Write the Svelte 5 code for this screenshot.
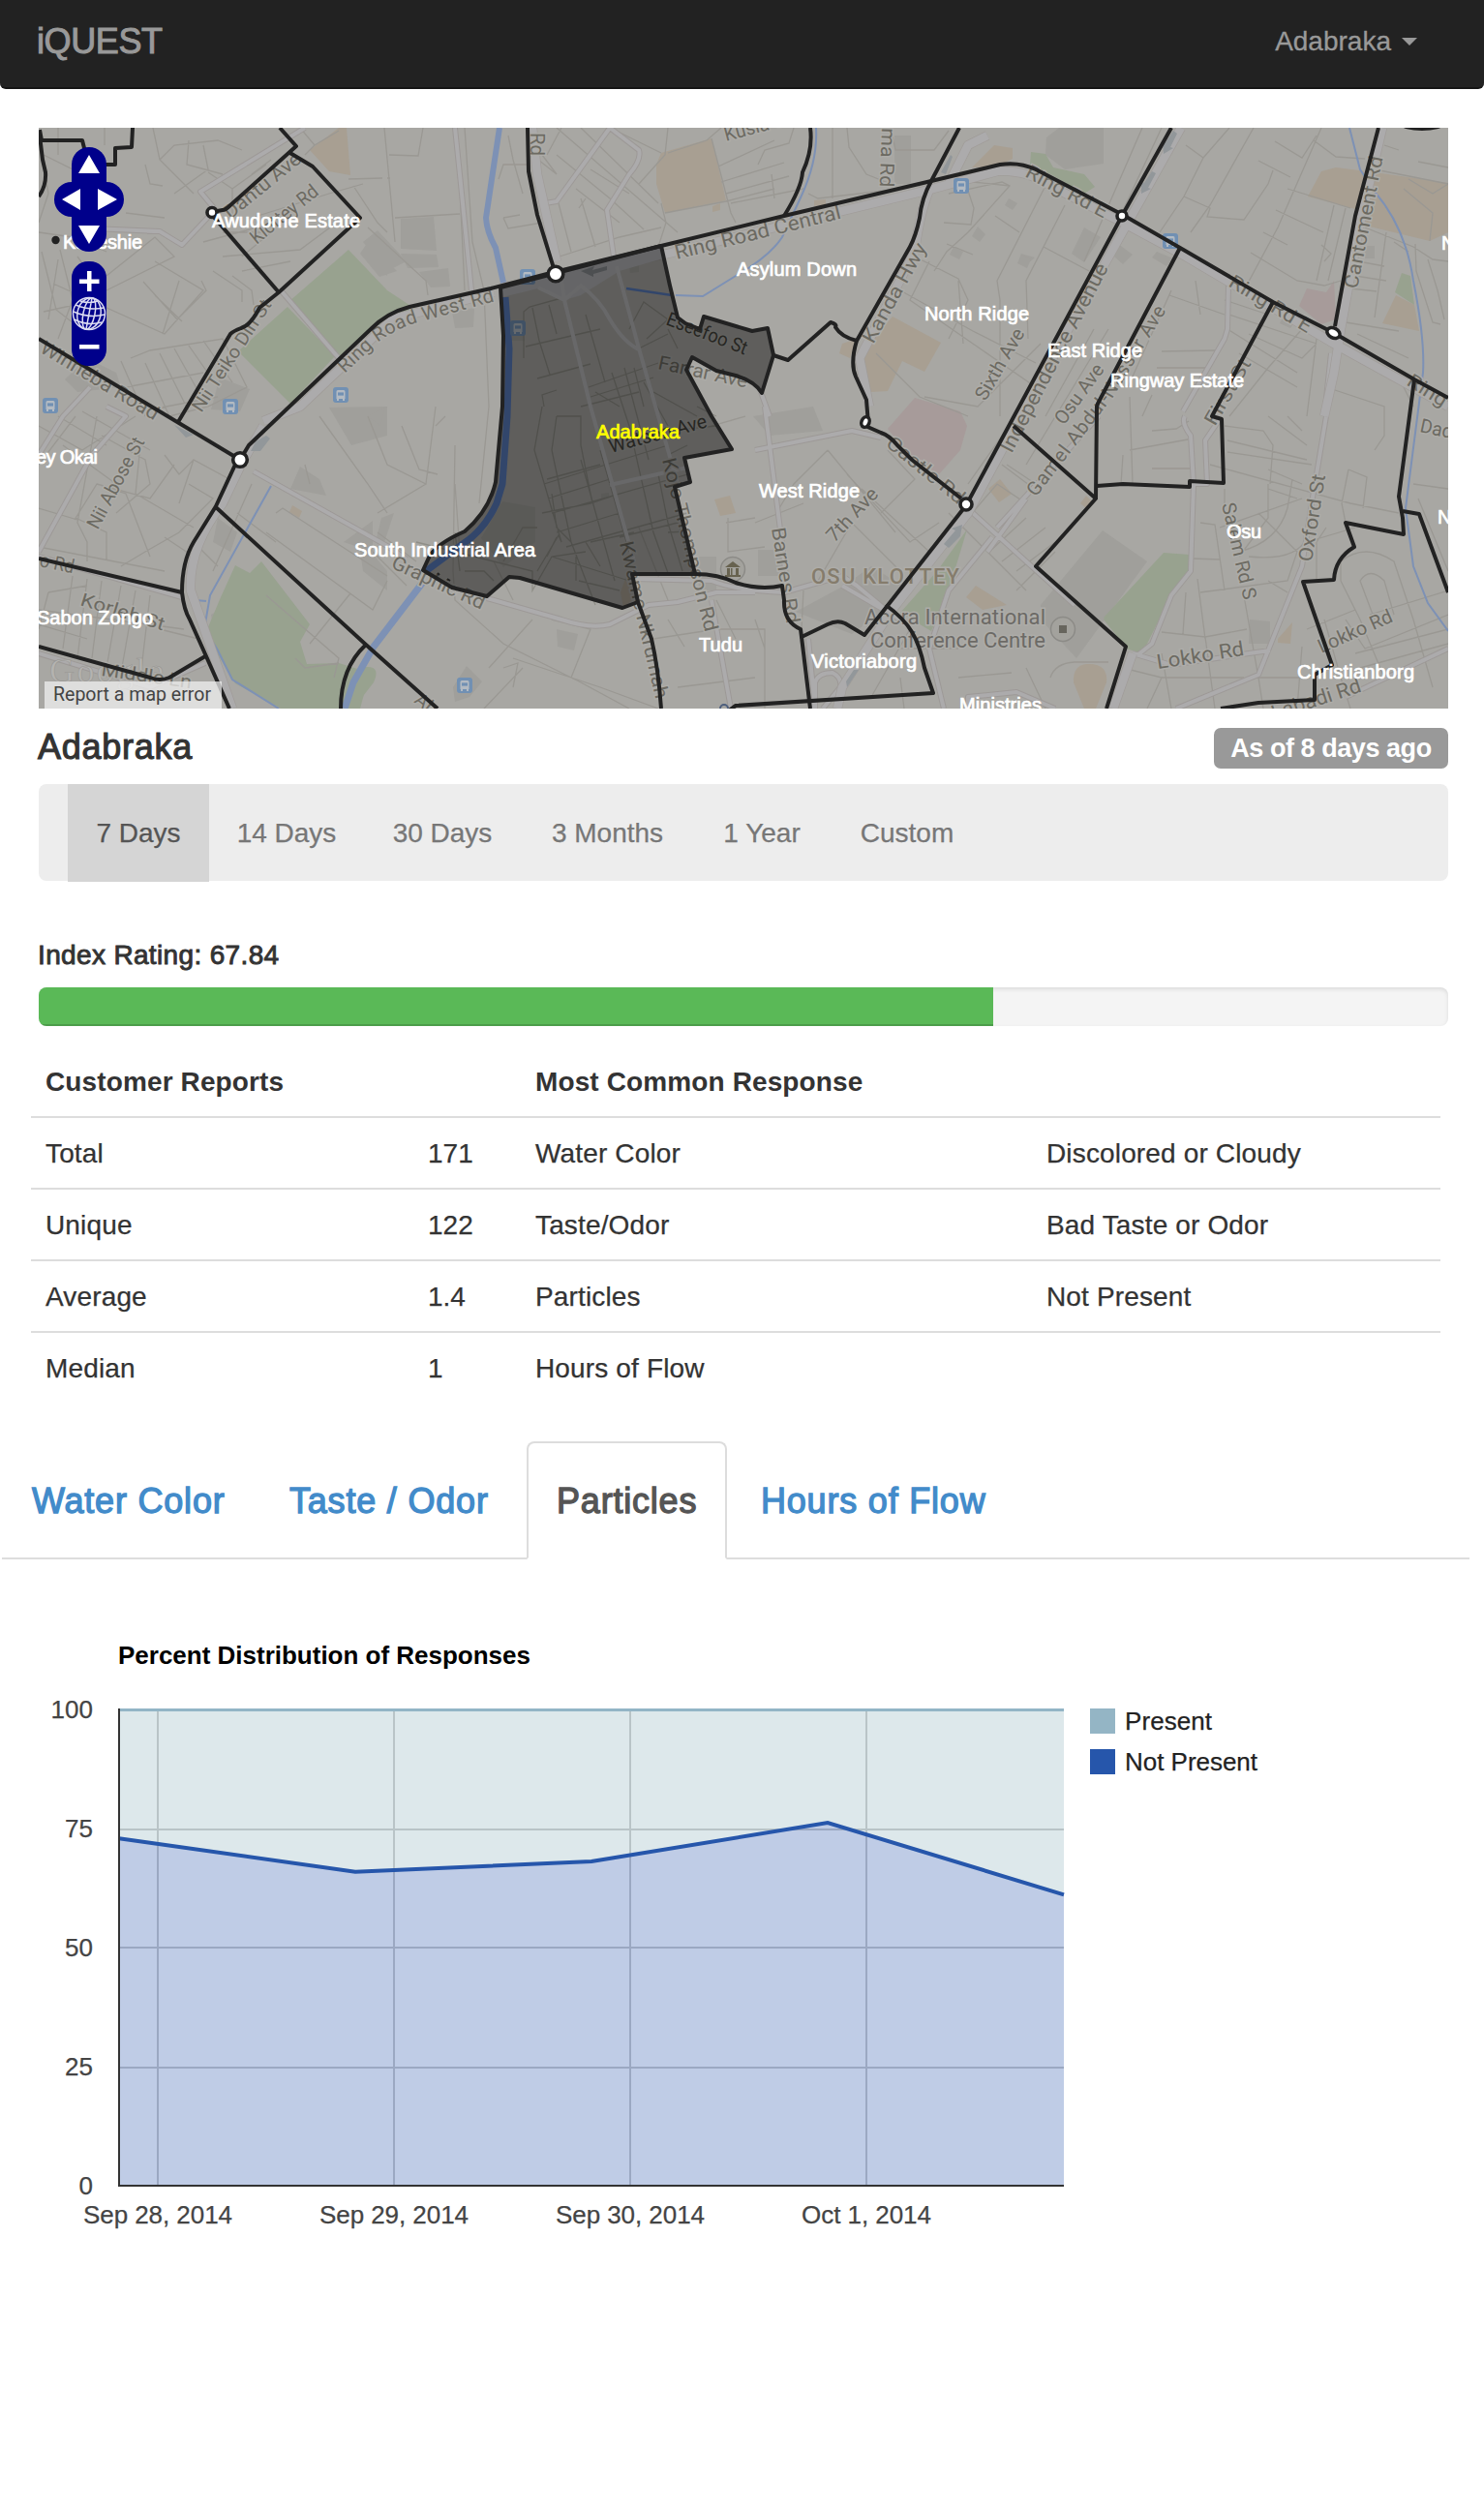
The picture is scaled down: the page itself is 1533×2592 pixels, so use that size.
<script>
  const periods = ['7 Days', '14 Days', '30 Days', '3 Months', '1 Year', 'Custom'];
  const rows = [
    ['Total', '171', 'Water Color', 'Discolored or Cloudy'],
    ['Unique', '122', 'Taste/Odor', 'Bad Taste or Odor'],
    ['Average', '1.4', 'Particles', 'Not Present'],
    ['Median', '1', 'Hours of Flow', '']
  ];
  const tabs = ['Water Color', 'Taste / Odor', 'Particles', 'Hours of Flow'];
  const rating = 67.84;

  const parks = [
    'M360 258L400 300L438 325L415 330L383 342L348 372L298 312Z',
    'M297 317L346 368L300 417L246 363Z',
    'M270 580L320 645L310 663L317 686L350 685L382 695L372 732H290L243 706L212 655L228 617L243 584L258 592Z',
    'M372 690Q395 685 386 705L365 732H355Z',
    'M999 547L980 610L962 652L930 633L968 590Z',
    'M1202 571L1229 573V592L1205 625L1180 675L1163 670L1140 638Z',
    'M1160 622L1140 640L1160 665Z',
    'M1065 157L1080 159L1088 173L1120 180L1131 193L1120 200L1087 181L1064 170Z',
    'M1448 282L1457 285L1461 315L1441 302Z'
  ];
  const sands = [
    'M350 132H358L362 181L340 177L320 155Z',
    'M683 158L735 143L750 207L687 220L678 190L678 170Z',
    'M736 213l8 -3v7l-8 2Z',
    'M922 327L972 354L955 384L932 373L917 404L900 405L892 385L890 365Z',
    'M870 355L885 350L878 370L867 365Z',
    'M1004 173L1027 150L1046 153V164L1030 172Z',
    'M841 207l12 -1v6l-12 1Z',
    'M1351 203L1365 177L1380 173L1420 178L1496 189V240L1477 249L1415 234L1400 216Z',
    'M1442 305L1461 315L1466 342L1428 334Z',
    'M738 516l16 -4l6 18l-16 3Z',
    'M1033 495L1045 510L1032 519L1021 505Z',
    'M1008 605L1040 625L1015 630L998 617Z',
    'M1122 512l8 8l-8 5l-6 -5Z',
    'M1320 660L1335 643L1333 665L1320 664Z',
    'M1109 705Q1108 687 1123 686Q1145 685 1143 705L1132 732H1120Z',
    'M302 522l10 6l-3 7l-10 -6Z',
    'M647 595L653 620L644 628L641 612Z'
  ];
  const pinks = [
    'M945 411L992 425L999 440L992 465L970 490L940 472L917 443Z',
    'M1350 298L1370 302L1378 290L1380 330L1365 335L1342 316Z'
  ];
  const blocks = [
    'M414 226L448 224L451 259L414 257Z', 'M380 250L410 280L392 286L372 262Z', 'M414 262L451 263L453 276L421 277Z',
    'M373 262L388 248L400 262L400 285Z', 'M467 322L490 318L489 338L470 339Z', 'M433 281L463 277L465 296L445 297Z',
    'M1081 142L1110 120L1140 132V169L1100 175L1080 160Z', 'M924 140H941V190H924Z', 'M1120 235L1137 245L1120 271L1107 262Z',
    'M1055 262L1069 266L1060 274L1052 270Z', 'M1010 234L1018 242L1012 250L1004 244Z', 'M1042 205l9 5l-5 7l-8 -5Z',
    'M1139 548L1185 580L1112 680L1075 640V625Z', 'M822 632L872 605L900 585L940 610L880 655Z',
    'M783 568H812V595H783Z', 'M778 430L840 420L850 445L795 450Z', 'M225 535L245 550L238 570L220 560Z',
    'M218 635L240 622L245 650L222 660Z', 'M90 370L120 385L125 400L80 405L67 392Z', 'M340 421L400 420V450L363 460Z',
    'M310 482L330 495L337 512L300 505Z', 'M227 390L258 402L248 425L218 423Z', 'M385 538V570L355 560Z',
    'M370 555L400 590V610L375 590Z', 'M400 420H398L393 440L380 430Z', 'M394 535L407 530L397 560L388 560Z',
    'M468 710L482 688L498 704L485 720L470 725Z', 'M1291 640L1312 642V665H1290Z', 'M720 575H740V610H722Z',
    'M575 650L597 655L593 672L576 668Z', 'M375 250L390 238L420 270L400 280Z',
    'M1155 252L1170 263L1160 273L1150 264Z', 'M1195 260L1212 267L1205 275L1190 266Z', 'M1410 254h10v13h-10Z',
    'M985 255l10 5l-4 8l-10 -5Z', 'M1055 263l10 5l-4 9l-10 -5Z', 'M1327 325l12 5l-6 9l-11 -5Z',
    'M519 518L553 524V560L520 586L497 556Z', 'M527 340h15v12h-15Z', 'M650 275l10 -1v7l-9 1Z', 'M621 510l8 -1v5l-8 1Z'
  ];
  const minor = `M40 140L50 200L40 230 M60 132V160 M108 132V150 M45 160L75 175V230 M40 240L75 245L110 260 M60 268L50 330 M43 260L58 320L90 345
    M62 258L75 310L60 350 M80 265L105 300L85 340 M110 285L160 245L180 265L110 300 M55 293L170 345L210 300L160 270 M45 322L100 310
    M148 291L183 330L213 300L208 290 M160 305L188 332 M168 345L185 290 M135 370L155 362L230 350L255 400L215 420L175 430 M150 375L175 430 M165 365L195 425
    M180 360L208 410 M195 357L225 400 M210 352L240 395 M130 400L210 385 M145 425L225 410 M125 373L150 430
    M158 132L165 165L200 200 M165 165L180 150L225 145L250 155 M195 145L193 170L230 180 M150 170L155 190L168 192 M130 220L170 225M210 150L215 175L180 200
    M215 178L240 195V225M240 195L275 170 M260 180L280 165 M230 240L280 240L250 265 M210 250L265 235 M230 265L310 258L345 232 M250 280L300 270M260 225L340 200L375 190
    M240 285L260 300L262 315 M220 280L250 300V312 M360 185L395 184 M365 192L390 230L400 240 M310 132L325 150L315 160M325 150L350 135
    M397 132L408 250 M402 160L432 161L437 132 M403 184L400 184 M408 225L475 221 M380 235L440 290L442 305 M472 132L480 300 M480 132L488 250L500 300 L505 420L495 520
    M525 140L530 165L540 200 M515 185L520 170L545 170 M520 225L525 236L560 230 M520 225L537 222
    M556 165L575 180L560 160 M575 132L700 240 M600 132L680 210 M630 132L683 158 M575 160L630 205 M595 195L640 230 M610 175L650 200 M630 205L665 237
    M565 160L580 132 M577 210L590 260 M600 205L615 255 M598 215L605 205 M578 265L640 245L683 235 M660 190L687 160L690 132 M680 255L688 230L683 210
    M690 158L730 145L745 132M735 143L755 220L760 230 M742 172L800 145 M745 188L810 168 M750 200L815 182 M755 210L830 195 M687 220L750 208L800 195
    M783 170L790 155L815 148L820 132 M800 205L797 180 M860 132V205 M875 132L877 152L895 180L925 192 M835 200L845 205L930 195
    M920 132L925 155L965 155L980 135 M948 190L960 210 M980 200L1035 188L1043 192L1000 240L978 260L965 280 M975 230L1003 232L1006 215L1000 197
    M978 252L1005 263 M1005 188L1043 192 M1080 192L1030 290L1033 310V430 M1100 212L1060 290L1062 350 M1028 223L1053 240 M1078 255L1125 280
    M945 265L990 288L1000 310L980 350 M960 270L940 310L1070 400 M930 300L1005 342L1070 375 M990 290L995 355 M1075 355L1010 420L955 410
    M905 365L950 410L1000 430 M1000 500L1060 415L1100 360 M1130 340L1080 430 M1145 340L1060 480 M1180 132L1120 270 M1200 132L1140 260
    M1225 150L1243 163L1223 203L1198 240 M1295 132L1250 212L1230 240 M1243 163L1270 132 M1223 203L1250 215L1247 224L1285 227L1310 190L1315 176
    M1365 132L1320 235L1285 300 M1300 166L1333 183 M1317 146L1345 163L1360 140 M1357 145L1380 162L1410 164 M1330 195L1395 215 M1318 217L1367 240
    M1305 240L1330 253 M1292 261L1340 290L1368 295L1385 290 M1378 212L1360 290 M1390 215L1372 290 M1365 253L1375 262L1368 270M1403 270L1430 275 M1400 285L1432 290
    M1395 298L1422 301 M1432 240L1420 328 M1410 235L1460 255L1480 268L1496 270 M1462 252L1463 280L1480 333L1488 335 M1475 268L1485 300L1492 330 M1430 150L1445 155 M1465 167L1496 173
    M1420 175L1496 190 M1455 185L1480 200L1496 190 M1455 260L1440 250 M1477 249L1480 220L1450 195 M1390 333L1445 342 M1402 345L1455 370 M1450 400L1460 420
    M1210 300L1165 400 M1208 305L1265 325 M1235 290L1240 325 M1200 363L1255 362 M1195 380H1245 M1265 310L1310 325 M1270 325L1360 355 M1268 340L1340 385
    M1280 365L1340 400 M1290 345L1345 370L1360 355 M1360 350L1350 430 M1345 340L1310 380L1270 430 M1385 360L1450 395 M1370 400L1430 420V450L1420 465
    M1167 410L1170 500 M1190 408L1180 430 M1190 445L1215 443L1228 435 M1167 465L1227 454 M1160 470L1158 500 M1190 484H1230
    M1265 440L1305 445L1315 460L1312 500 M1268 455L1350 475 M1268 467L1355 480 M1250 480L1395 520L1445 530 M1310 430L1350 460 M1330 430L1345 445
    M1310 485L1345 500 M1310 505L1340 515 M1335 495L1330 525 M1265 505V530 M1310 500V535L1280 575 M1240 540L1255 542L1265 610 M1260 545L1345 515 M1330 525Q1320 560 1280 570
    M1290 575Q1340 580 1350 555 M1300 530L1340 570L1330 600L1240 612M1310 600L1330 612 M1232 577L1260 578 M1237 598L1245 660 M1225 612L1222 655 M1200 653L1245 658L1288 650 M1284 610L1300 700 L1305 732
    M1370 545L1360 560V600 M1350 560L1400 545 M1393 485L1386 520L1390 540 M1393 485L1412 493L1408 525 M1385 600V580Q1410 560 1440 580L1460 640L1480 710 M1385 600L1405 640L1430 700
    M1420 640L1405 600Q1415 585 1430 600L1440 635 M1415 635L1496 610 M1390 640L1410 670L1496 635 M1400 675L1496 650 M1405 690L1496 665 M1350 650L1400 630 M1368 640L1385 700L1395 732 M1465 515L1496 590 M1460 500L1496 505
    M40 440L85 465L140 430 M60 430L110 460 M85 425L155 465 M78 430L40 480 M65 460L120 500 M100 500L155 515L180 480 M100 430L80 540L90 560V580 M78 535L110 550L110 580
    M40 525L80 537 M77 537L100 500L130 510L155 575 M170 470L185 490L200 475 M145 460L140 510L200 545 M195 500L220 515L185 550L150 570L125 585 M185 520L200 475L237 495 M170 555L200 575
    M105 450L150 475L155 500L120 530 M40 565L170 590 M50 612L90 605 M50 612L40 650 M75 595L65 670 M90 598L80 680 M105 600L95 680 M125 605L110 690 M140 610L125 695 M155 615L145 700 M40 630L190 650 M40 645L90 660 M200 560L225 585 M165 650L205 660
    M245 530L285 560 M220 590L260 500 M285 530L292 525L400 595 M275 550L385 630L400 600 M275 615L350 680L345 700 M350 685L315 690L305 680 M362 613L320 665 M320 500L315 480 M330 430L380 500L400 530
    M380 430L400 480L440 500L450 420 M450 440L460 430M440 500L390 530 M415 440L433 485L452 490 M470 460L468 590L470 620L520 665L600 705L650 732 M470 500L475 570
    M390 550L430 580 M385 570L420 605 M510 580L530 620 M505 690L550 640 M530 680L620 710L680 732 M520 690L535 685L530 710 M500 732L540 690 M570 640L610 650L590 700
    M660 545L690 620 M700 540L720 600 M675 660L740 650 M690 640L707 668 M700 710L780 700 M740 620L760 660 M735 440L770 430 M750 540L780 535 M752 535V570L790 565
    M740 650L790 650L790 732 M780 640L790 670 M855 465L925 550 M855 465L820 500L805 525 M875 490L940 560L970 540 M910 530L945 495L917 465 M890 505L960 570 M930 590L880 540L845 600 M780 540L830 520 M830 610L828 650
    M980 530L1050 600 M1000 535L1030 500L1060 520 M1022 570L1060 535 M1035 580L1080 545 M1050 590L1090 560 M1050 610L1090 570 M1010 560L1060 610 M1040 480L1070 500 M940 650L900 720 M930 670H990 M990 700L1045 695 M1035 480L1075 510
    M1085 700Q1090 685 1110 684H1145 M1060 690L1080 732 M930 700L934 732 M1160 690L1200 700L1185 732 M1200 700L1285 700 M1200 675L1210 732 M1245 658L1255 732 M1345 668L1340 732 M1290 700L1345 700`;
  const major = `M315 132L207 198L221 215 M315 132L207 198 M152 239H165L188 253L220 219 M95 236L165 239L188 253 M470 132L477 200L487 300 M630 132L575 208L563 210 M630 132L660 155Q663 165 650 180L627 217L634 265
    M40 570L95 470L130 430L110 420 M93 400L65 430L40 470 M40 575L188 617 M40 675L155 710L212 685 M290 300L350 370 M262 487L400 564L420 578 M503 618L580 640Q610 650 630 645L670 625L700 622L740 612L780 612
    M655 598L735 600Q760 610 810 612L870 595L885 605L915 630 M780 465L880 445L910 452 M790 420L812 595 M786 405L795 430 M870 605L930 640 M735 620L755 732
    M1005 530L1060 580L1110 625 M1025 555L980 610L960 670L975 732 M1060 515L1020 570 M1135 430L1030 545 M1000 732L1000 720L1050 715L1090 732 M845 740L835 720 M835 660L842 732 M842 732V705Q845 695 860 695Q870 700 868 710L850 732
    M1269 295L1268 340L1265 350L1222 425 M1224 430Q1220 437 1230 450L1233 500 M1260 433L1245 455L1247 500H1233L1230 590L1210 615L1190 665L1175 677 M1170 675L1210 687L1290 675L1312 672
    M1375 365L1368 430 M1370 430L1355 520L1345 585L1300 697L1215 732 M1387 360L1378 350 M1390 720L1496 670`;
  const arterial = `M550 132L555 180L575 270 M1020 140L1000 150L980 190 M575 285L690 262L960 196L1030 177Q1060 175 1085 192L1160 230L1225 265L1378 355L1496 420 M960 196Q950 220 945 260L888 370L898 420
    M1220 132L1165 230L1070 400L1000 530L920 632L870 710L865 732 M272 440L250 478L230 520Q195 565 197 610L240 732 M272 435L310 420L405 330L510 302 M1428 132L1405 230L1385 340L1378 385L1368 430 M1170 675L1150 732 M690 262L960 196`;
  const boundaries = [
    'M40 350L243 472', 'M243 480L223 523L200 560Q188 580 188 612Q190 630 196 640L213 678L237 732', 'M223 524L378 666L452 732',
    'M378 666Q352 690 352 732', 'M40 577L188 612', 'M40 668L155 700Q165 704 175 700L212 678',
    'M184 436L238 345Q241 342 249 339Q259 336 268 318L288 302L372 225L323 172L298 157', 'M288 302L219 222', 'M219 219L230 217Q233 217 238 212L306 151L289 132',
    'M41 134L43 145H85L87 153L88 160 M41 140L44 165L47 178Q48 192 40 203', 'M105 170H119V153L136 152L137 132',
    'M248 475L257 460L383 340Q400 323 423 317L507 298L565 283L683 254L810 223L962 187L1033 170Q1053 167 1070 175L1160 222L1219 256L1315 312L1378 344L1461 392L1496 411',
    'M545 132L546 177L555 222L572 277', 'M837 132Q840 155 829 178Q828 194 810 223',
    'M991 132L962 187Q952 205 950 225Q946 244 940 255L885 352Q878 375 884 389L895 413L897 438',
    'M1210 132L1159 223L998 522L893 656L873 644Q865 640 855 645L828 658L827 650Q809 642 810 620L808 605Q785 610 760 602Q742 593 718 593',
    'M894 440L910 447Q919 450 927 460L942 475L993 515', 'M1047 440L1132 515L1070 585L1163 668L1143 732',
    'M1219 256L1134 417L1133 420L1132 515', 'M1133 502L1160 500L1229 503V497L1264 499L1262 433L1252 430L1315 312',
    'M1461 392L1456 430L1445 513L1449 535L1450 552L1390 540L1399 565Q1379 577 1378 599L1346 601L1376 687L1358 697V723L1300 726L1261 732',
    'M1449 528L1466 531L1496 612', 'M1424 132L1400 223L1379 337', 'M885 352Q869 348 863 338Q865 335 858 333L814 372L799 367',
    'M659 622L673 660Q680 690 683 732', 'M915 625C940 643 949 660 955 690L964 716L760 729L753 734', 'M828 658L837 732'
  ];
  const selected = 'M517 297L520 347L519 420L512 498Q505 528 480 549Q450 562 443 576L437 589L467 607L503 616L526 596L537 597L643 628L659 622L653 593L718 593L697 503L713 498L707 473L756 464L735 430L709 382L715 369L740 383L760 388Q780 394 787 406L799 367L793 339L777 342L727 327L723 340L708 334L700 328L692 295L683 254Z';
  const innerMinor = `M541 370V322L547 317L580 308 M550 318L557 352L568 387 M567 315L575 345 M543 358L620 340 M555 391L610 376 M562 420L560 408L575 403 M560 420L552 465L580 560L577 553L555 590 M575 430L570 465L590 560L615 625
    M575 430H600V460L612 520 M605 325L625 395 M610 410L675 390 M600 420L660 405 M615 405L640 420 M632 385L650 440L675 550L690 592 M645 380L670 475 M655 380L665 420 M665 395L690 440 M675 405L720 430
    M608 400L680 375 M640 510L610 520L560 530 M562 500L690 460 M566 515L630 495 M570 530L640 510L710 490 M575 550L640 530 M585 565L710 530 M640 555L700 540 M565 495L620 480 M570 510L575 545L590 560
    M600 475L635 600 M620 465L650 570 M605 570L570 575L550 610V590L430 560 M575 555L565 575 M595 575V600 M605 560L620 585 M570 575L650 600 M610 560L655 550 M598 600L640 610 M555 545L540 545L520 580
    M470 550L475 590 M480 590H500L510 600 M650 340L665 312L690 330L668 350 M660 360L690 345 M690 340L700 360 M690 445L740 440 M720 420L740 430 M690 470L710 460 M680 490L690 540L705 590 M690 550L710 549`;
  const innerMajor = 'M580 290L583 310L610 420L655 580 M583 310L600 295Q620 310 630 330Q645 355 662 362 M637 275L660 360L680 430L700 500 M556 297L583 310 M630 501L710 483';

  // Street names: text, anchor x, baseline y, rotation, size, drawn width
  const streets = [
    ['Dantu Ave', 238, 227, -39, 20, 96], ['Klottey Rd', 265, 253, -39, 20, 84], ['Nii Teiko Din St', 208, 427, -57, 19, 134],
    ['Winneba Road', 40, 363, 31, 20, 139], ['Nii Abose St', 101, 548, -62, 20, 104],
    ['o Rd', 40, 585, 12, 20, 36], ['Korleh St', 82, 625, 17, 19, 90], ['Middle Ln', 104, 698, 8, 19, 94],
    ['Rd', 548, 137, 90, 20, 24], ['Kusia St', 750, 146, -15, 20, 70], ['Ring Road Central', 699, 268, -14, 21, 176],
    ['Eseefoo St', 687, 335, 21, 20, 88], ['Farrar Ave', 679, 381, 12, 20, 94], ['Watson Ave', 631, 468, -15, 20, 104],
    ['Kojo Thompson Rd', 684, 475, 76, 20, 184], ['Kwame Nkrumah', 640, 561, 77, 20, 166], ['Graphic Rd', 403, 586, 25, 20, 104],
    ['Ab', 427, 725, 38, 19, 24], ['ma Rd', 911, 132, 92, 20, 61], ['Kanda Hwy', 902, 356, -61, 20, 115],
    ['Sixth Ave', 1018, 415, -60, 20, 82], ['Independence Avenue', 1045, 469, -62.5, 21, 217], ['Osu Ave', 1099, 440, -54, 20, 72],
    ['Ring Rd E', 1058, 182, 28, 20, 93], ['Ring Rd E', 1268, 295, 31, 20, 96],
    ['Cantoment Rd', 1402, 299, -79, 20, 139], ['First St', 1255, 441, -60, 20, 76], ['Ring', 1452, 397, 32, 20, 45],
    ['Dad', 1466, 446, 12, 20, 34], ['Castle Rd', 914, 460, 39, 20, 98], ['7th Ave', 862, 561, -47, 20, 68],
    ['Barnes Rd', 797, 546, 81, 20, 100], ['Salem Rd S', 1262, 521, 77, 20, 102], ['Oxford St', 1355, 581, -81, 20, 91],
    ['Lokko Rd', 1196, 691, -9, 21, 91], ['Lokko Rd', 1365, 675, -24, 20, 82], ['Labadi Rd', 1316, 744, -18, 21, 96]
  ];
  const shaded = ['Eseefoo St', 'Watson Ave'];
  const places = [
    ['Awudome Estate', 219, 235, 153], ['Kaneshie', 65, 257, 82], ['Asylum Down', 761, 285, 124], ['North Ridge', 955, 331, 108],
    ['East Ridge', 1082, 369, 98], ['Ringway Estate', 1147, 400, 138], ['ey Okai', 37, 479, 64], ['South Industrial Area', 366, 575, 187],
    ['Sabon Zongo', 38, 645, 120], ['Tudu', 722, 673, 45], ['West Ridge', 784, 514, 104], ['Victoriaborg', 838, 690, 109],
    ['Ministries', 991, 735, 85], ['Osu', 1267, 556, 36], ['Christianborg', 1340, 701, 121], ['N', 1489, 258, 14], ['N', 1485, 541, 14]
  ];
  const stops = [[52, 419], [238, 420], [352, 408], [545, 286], [535, 339], [993, 192], [1209, 249], [480, 708]];
  const rings = [[248, 475, 7.3], [574, 283, 7.8], [1159, 223, 5], [219, 219.5, 5], [998, 521, 6]];

  const values = [73, 66, 68.2, 76.3, 61.2];
  const px = (i) => 123 + i * 244;
  const py = (v) => 2258 - v * 4.913;
  const line = values.map((v, i) => `${px(i)},${py(v)}`).join(' ');
  const ticks = [100, 75, 50, 25, 0];
  const days = [['Sep 28, 2014', 163, 154], ['Sep 29, 2014', 407, 154], ['Sep 30, 2014', 651, 154], ['Oct 1, 2014', 895, 134]];
</script>

<div class="page">
  <header>
    <span class="brand">iQUEST</span>
    <span class="area">Adabraka <i class="caret"></i></span>
  </header>

  <main>
    <svg class="map" viewBox="40 132 1456 600" width="1456" height="600">
      <rect x="40" y="132" width="1456" height="600" fill="#a8a7a3" />
      {#each blocks as d}<path {d} fill="#a09f9b" />{/each}
      {#each parks as d}<path {d} fill="#98a28f" />{/each}
      {#each sands as d}<path {d} fill="#a89f92" />{/each}
      {#each pinks as d}<path {d} fill="#a79b9a" />{/each}
      <path d={minor} class="minor" />
      <g class="water">
        <path d="M516 132L508 185L502 225Q503 240 512 256L520 292" stroke-width="6" />
        <path d="M438 600L386 668L365 705L356 732" stroke-width="7" />
        <path d="M280 502L217 615L211 650L224 670L240 702L288 732 M202 620L213 621 M843 132Q845 165 828 202L808 245Q795 265 760 285L726 306L698 305 M1394 132L1405 175L1420 198Q1452 235 1460 290Q1472 350 1470 385L1452 525L1460 585L1475 623L1496 652" stroke-width="2" />
      </g>
      <path d={major} class="major-edge" />
      <path d={major} class="major" />
      <path d={arterial} class="arterial-edge" />
      <path d={arterial} class="arterial" />
      <g fill="#92979a">
        <path d="M1212 135l4 3l-7 14l3 1l-10 6l-1 -13l3 1Z M1190 177l4 2l-8 15l3 1l-10 5v-12l3 1Z M275 450l4 3l-10 13h-10l5 -10Z M180 439l20 10l-8 3Z M975 562l12 -14l-4 -2l11 -4l-2 12l-12 12Z M874 704l8 -12h5l-12 18Z M972 178l10 -18l2 2l-7 18Z" />
      </g>

      <path d="M517 298L683 254L685 267L640 280L600 305L583 310L560 297L519 307Z" fill="#b3b3b6" />
      <path d={innerMinor} fill="none" stroke="#8f8e87" stroke-width="1.3" />
      <path d={innerMajor} fill="none" stroke="#b8b8bb" stroke-width="4" />
      <path d="M522 307L526 360L524 430L519 500L513 520Q500 548 478 562L440 590" fill="none" stroke="#5a7cbd" stroke-width="7" />
      <path d="M647 298L694 305" stroke="#5a7cbd" stroke-width="2.4" />
      <path d="M600 280l14 -5l-2 4l15 -4v4l-14 4v3Z" fill="#888d90" />

      {#each stops as [x, y]}
        <g transform="translate({x} {y})">
          <rect x="-8" y="-8" width="16" height="16" rx="3" fill="#7190b3" />
          <path d="M-4.5 4V-3.5Q-4.5-5-3-5H3Q4.5-5 4.5-3.5V4Z M-4 4v2h2v-2 M4 4v2h-2v-2" fill="#b3bac2" />
          <rect x="-3" y="-2.6" width="6" height="3.2" fill="#7190b3" />
        </g>
      {/each}

      <text x="51" y="705" class="logo" textLength="118">Google</text>
      <path id="ring-west" d="M356 386L390 354Q410 339 432 333L530 306" fill="none" />
      <path id="nasser" d="M1070 514L1150 410L1215 304" fill="none" />
      <text class="street" font-size="20" textLength="176"><textPath href="#ring-west">Ring Road West Rd</textPath></text>
      <text class="street" font-size="20" textLength="236"><textPath href="#nasser">Gamel Abdul-Nasser Ave</textPath></text>
      {#each streets as [name, x, y, angle, size, width]}
        <text class="street" class:shaded={shaded.includes(name)} transform="translate({x} {y}) rotate({angle})" font-size={size} textLength={width} lengthAdjust="spacingAndGlyphs">{name}</text>
      {/each}
      <text x="838" y="603" class="district" textLength="153">OSU KLOTTEY</text>
      <text x="893" y="645" class="poi" textLength="187">Accra International</text>
      <text x="899" y="669" class="poi" textLength="181">Conference Centre</text>
      <g fill="#a3a29d" stroke="#8c8b87" stroke-width="1.5">
        <circle cx="1098" cy="650" r="12.500" />
        <circle cx="757" cy="588" r="12.500" />
      </g>
      <rect x="1094" y="646" width="8" height="8" fill="#67655d" />
      <path d="M749 586L757 580L765 586Z M751 587h3v7h-3Z M760 587h3v7h-3Z M755 587h1.5v7h-1.5Z M749 594h16v2h-16Z" fill="#67624f" />
      <circle cx="748" cy="732" r="4" fill="none" stroke="#4e5f7d" stroke-width="2" />

      <path d={selected} fill="#000" fill-opacity=".435" />
      {#each boundaries as d}<path {d} class="boundary" />{/each}
      <path d={selected} class="boundary" />
      <ellipse cx="1469" cy="129" rx="22" ry="6" fill="#222" />
      {#each rings as [cx, cy, r]}
        <circle {cx} {cy} {r} fill="#fff" stroke="#222" stroke-width="3.6" />
      {/each}
      <ellipse cx="1377.500" cy="344" rx="7" ry="5" transform="rotate(28 1377.500 344)" fill="#fff" stroke="#222" stroke-width="3.500" />
      <ellipse cx="894" cy="436" rx="4" ry="5.500" transform="rotate(20 894 436)" fill="#fff" stroke="#222" stroke-width="3.500" />
      <circle cx="57.500" cy="248" r="4.200" fill="#222" />
      <path d="M452 592l2 2 M462 598l3 2" stroke="#222" stroke-width="2" />

      {#each places as [name, x, y, width]}
        <text {x} {y} class="place" textLength={width}>{name}</text>
      {/each}
      <text x="616" y="452.500" class="place current" textLength="86">Adabraka</text>

      <g fill="#00008b">
        <rect x="74" y="152" width="36" height="108" rx="18" />
        <rect x="56" y="188" width="72" height="36" rx="18" />
        <rect x="74" y="270" width="36" height="108" rx="17" />
      </g>
      <g fill="#fff">
        <path d="M92 160L103 179H81Z M92 252L103 233H81Z M64 206L83 195V217Z M121 206L101 195V217Z" />
        <path d="M82 288.500h8V280h4.500v8.500h8v4.500h-8v8h-4.500v-8H82Z M82 356h20.500v4.500H82Z" />
      </g>
      <g fill="none" stroke="#dcdcf2" stroke-width="1.500">
        <circle cx="92" cy="324" r="16.500" />
        <ellipse cx="92" cy="324" rx="6" ry="16.500" transform="rotate(12 92 324)" />
        <ellipse cx="92" cy="324" rx="12" ry="16.500" transform="rotate(12 92 324)" />
        <path d="M95 308L89 340 M78 315Q92 321 107 318 M76 322Q92 329 108 325 M77 330Q90 337 105 333 M83 311Q92 314 101 311" />
      </g>

      <rect x="46" y="704" width="183" height="28" fill="#f5f5f5" fill-opacity=".7" />
      <text x="55" y="724" class="report" textLength="163" lengthAdjust="spacingAndGlyphs">Report a map error</text>
    </svg>

    <div class="title">
      <h4>Adabraka</h4>
      <span class="badge">As of 8 days ago</span>
    </div>

    <nav class="periods">
      {#each periods as p, i}<a class:active={i === 0}>{p}</a>{/each}
    </nav>

    <h5>Index Rating: {rating}</h5>
    <div class="progress"><div class="bar" style="width: {rating - 0.13}%"></div></div>
  </main>

  <table>
    <thead>
      <tr><th>Customer Reports</th><th></th><th>Most Common Response</th><th></th></tr>
    </thead>
    <tbody>
      {#each rows as row}
        <tr>{#each row as cell}<td>{cell}</td>{/each}</tr>
      {/each}
    </tbody>
  </table>

  <div class="tabs">
    {#each tabs as t, i}<a class:active={i === 2}>{t}</a>{/each}
  </div>

  <svg class="chart" viewBox="0 1650 1533 700" width="1533" height="700">
    <text x="122" y="1719" class="chart-title" textLength="426">Percent Distribution of Responses</text>
    <g stroke="#ccc" stroke-width="2">
      {#each [1890, 2012, 2136] as y}<path d="M123 {y}H1099" />{/each}
      {#each days as [, x]}<path d="M{x} 1766V2258" />{/each}
    </g>
    <polygon points="123,1767 1099,1767 {line.split(' ').reverse().join(' ')}" fill="#8fb4be" fill-opacity=".3" />
    <polygon points="{line} 1099,2258 123,2258" fill="#2a56ab" fill-opacity=".3" />
    <path d="M123 1766.500H1099" stroke="#93b5c6" stroke-width="3" />
    <polyline points={line} fill="none" stroke="#2656ab" stroke-width="4" />
    <path d="M123 1765V2258H1099" fill="none" stroke="#333" stroke-width="2" />
    {#each ticks as t, i}
      <text x="96" y={1775 + i * 123} class="tick" text-anchor="end">{t}</text>
    {/each}
    {#each days as [label, x, width]}
      <text {x} y="2297" class="tick" text-anchor="middle" textLength={width}>{label}</text>
    {/each}
    <rect x="1126" y="1765" width="26" height="26" fill="#94b5c5" />
    <rect x="1126" y="1807" width="26" height="26" fill="#2656ab" />
    <text x="1162" y="1787" class="legend" textLength="90">Present</text>
    <text x="1162" y="1829" class="legend" textLength="137">Not Present</text>
  </svg>
</div>

<style>
  :global(body) { margin: 0; background: #fff; }
  .page {
    box-sizing: border-box;
    width: 1533px;
    height: 2592px;
    overflow: hidden;
    font-family: 'Liberation Sans', Arial, sans-serif;
    font-size: 28px;
    line-height: 40px;
    color: #333;
  }
  header {
    display: flex;
    justify-content: space-between;
    align-items: center;
    box-sizing: border-box;
    height: 92px;
    padding: 0 69px 4px 38px;
    border-radius: 0 0 6px 6px;
    border-bottom: 2px solid #151515;
    background: #222;
    color: #999;
  }
  .brand { font-size: 36px; letter-spacing: -0.4px; -webkit-text-stroke: 1px #999; }
  .area { display: flex; align-items: center; gap: 11px; -webkit-text-stroke: 0.3px #999; }
  .caret { border: 8px solid transparent; border-top-color: #999; border-bottom: 0; }
  main { padding: 40px 37px 0 40px; }
  .map { display: block; }
  .minor { fill: none; stroke: #9a9893; stroke-width: 1.3; }
  .water { fill: none; stroke: #7d91b5; }
  .major, .major-edge, .arterial, .arterial-edge { fill: none; stroke-linejoin: round; }
  .major-edge { stroke: #9d9997; stroke-width: 6; }
  .major { stroke: #acabac; stroke-width: 4; }
  .arterial-edge { stroke: #a09c99; stroke-width: 10; }
  .arterial { stroke: #acabac; stroke-width: 8.6; }
  .street {
    font-family: Roboto, sans-serif;
    fill: #6c6a62;
    stroke: #adaca8;
    stroke-width: 3px;
    paint-order: stroke;
  }
  .shaded { fill: #45443d; }
  .district { font: 500 22px Roboto, sans-serif; fill: #857c6c; stroke: #adaca8; stroke-width: 3px; paint-order: stroke; }
  .poi { font: 22px Roboto, sans-serif; fill: #6c6a66; stroke: #adaca8; stroke-width: 3px; paint-order: stroke; }
  .logo { font: 36px 'Liberation Serif', serif; fill: #b4b3b0; stroke: #93928f; stroke-width: 0.5px; }
  .boundary { fill: none; stroke: #222; stroke-width: 4; stroke-linejoin: round; }
  .place { font-size: 20px; fill: #fff; stroke: #fff; stroke-width: 0.7px; }
  .current { fill: #ff0; stroke: #ff0; }
  .report { font: 20px Roboto, sans-serif; fill: #444; }
  .title { display: flex; justify-content: space-between; align-items: center; height: 78px; margin-top: 2px; }
  h4 { margin: -3px 0 0 -1px; font-size: 36px; font-weight: 400; letter-spacing: 0.75px; -webkit-text-stroke: 1.1px #333; }
  .badge {
    box-sizing: border-box;
    width: 242px;
    height: 42px;
    border-radius: 7px;
    background: #999;
    color: #fff;
    font-size: 27px;
    font-weight: 700;
    letter-spacing: -0.45px;
    line-height: 42px;
    text-align: center;
    white-space: nowrap;
  }
  .periods {
    display: grid;
    grid-template-columns: 146px 160px 162px 179px 140px 160px;
    height: 100px;
    margin-top: -2px;
    padding-left: 30px;
    border-radius: 8px;
    background: #ededed;
  }
  .periods a { line-height: 101px; text-align: center; color: #777; -webkit-text-stroke: 0.25px #777; }
  .periods .active { background: #d5d5d5; color: #555; -webkit-text-stroke-color: #555; }
  h5 { margin: 57px 0 13px -1px; font-size: 28px; font-weight: 400; line-height: 40px; letter-spacing: 0.35px; -webkit-text-stroke: 0.9px #333; }
  .progress { height: 40px; border-radius: 8px; background: #f4f4f4; box-shadow: inset 0 2px 4px rgba(0, 0, 0, .1); overflow: hidden; }
  .bar { height: 100%; background: #5ab957; box-shadow: inset 0 -2px 0 rgba(0, 0, 0, .15); }
  table { width: 1456px; margin: 21px 0 0 32px; border-collapse: separate; border-spacing: 0; table-layout: fixed; }
  th, td { box-sizing: border-box; padding: 17px 0 15px 15px; text-align: left; height: 74px; white-space: nowrap; }
  th { height: 72px; letter-spacing: 0.12px; }
  td { border-top: 2px solid #ddd; letter-spacing: 0.15px; -webkit-text-stroke: 0.25px #333; }
  td:nth-child(2) { letter-spacing: 0; }
  th:nth-child(1) { width: 395px; }
  th:nth-child(2) { width: 111px; }
  th:nth-child(3) { width: 528px; }
  .tabs {
    display: grid;
    grid-template-columns: 262px 272px 207px 300px;
    column-gap: 4px;
    box-sizing: border-box;
    width: 1516px;
    height: 122px;
    margin: 40px 0 0 2px;
    border-bottom: 2px solid #ddd;
  }
  .tabs a {
    box-sizing: border-box;
    height: 122px;
    padding-left: 29px;
    border: 2px solid transparent;
    font-size: 36px;
    line-height: 119px;
    color: #428bca;
    letter-spacing: 0.8px;
    -webkit-text-stroke: 1.3px #428bca;
  }
  .tabs .active { border-color: #ddd #ddd #fff; border-radius: 8px 8px 0 0; color: #555; background: #fff; -webkit-text-stroke-color: #555; }
  .chart { display: block; margin-top: 39px; }
  .chart-title { font-size: 26px; font-weight: 700; fill: #000; }
  .tick { font-size: 26px; fill: #444; stroke: #444; stroke-width: 0.25px; }
  .legend { font-size: 26px; fill: #222; stroke: #222; stroke-width: 0.25px; }
</style>
